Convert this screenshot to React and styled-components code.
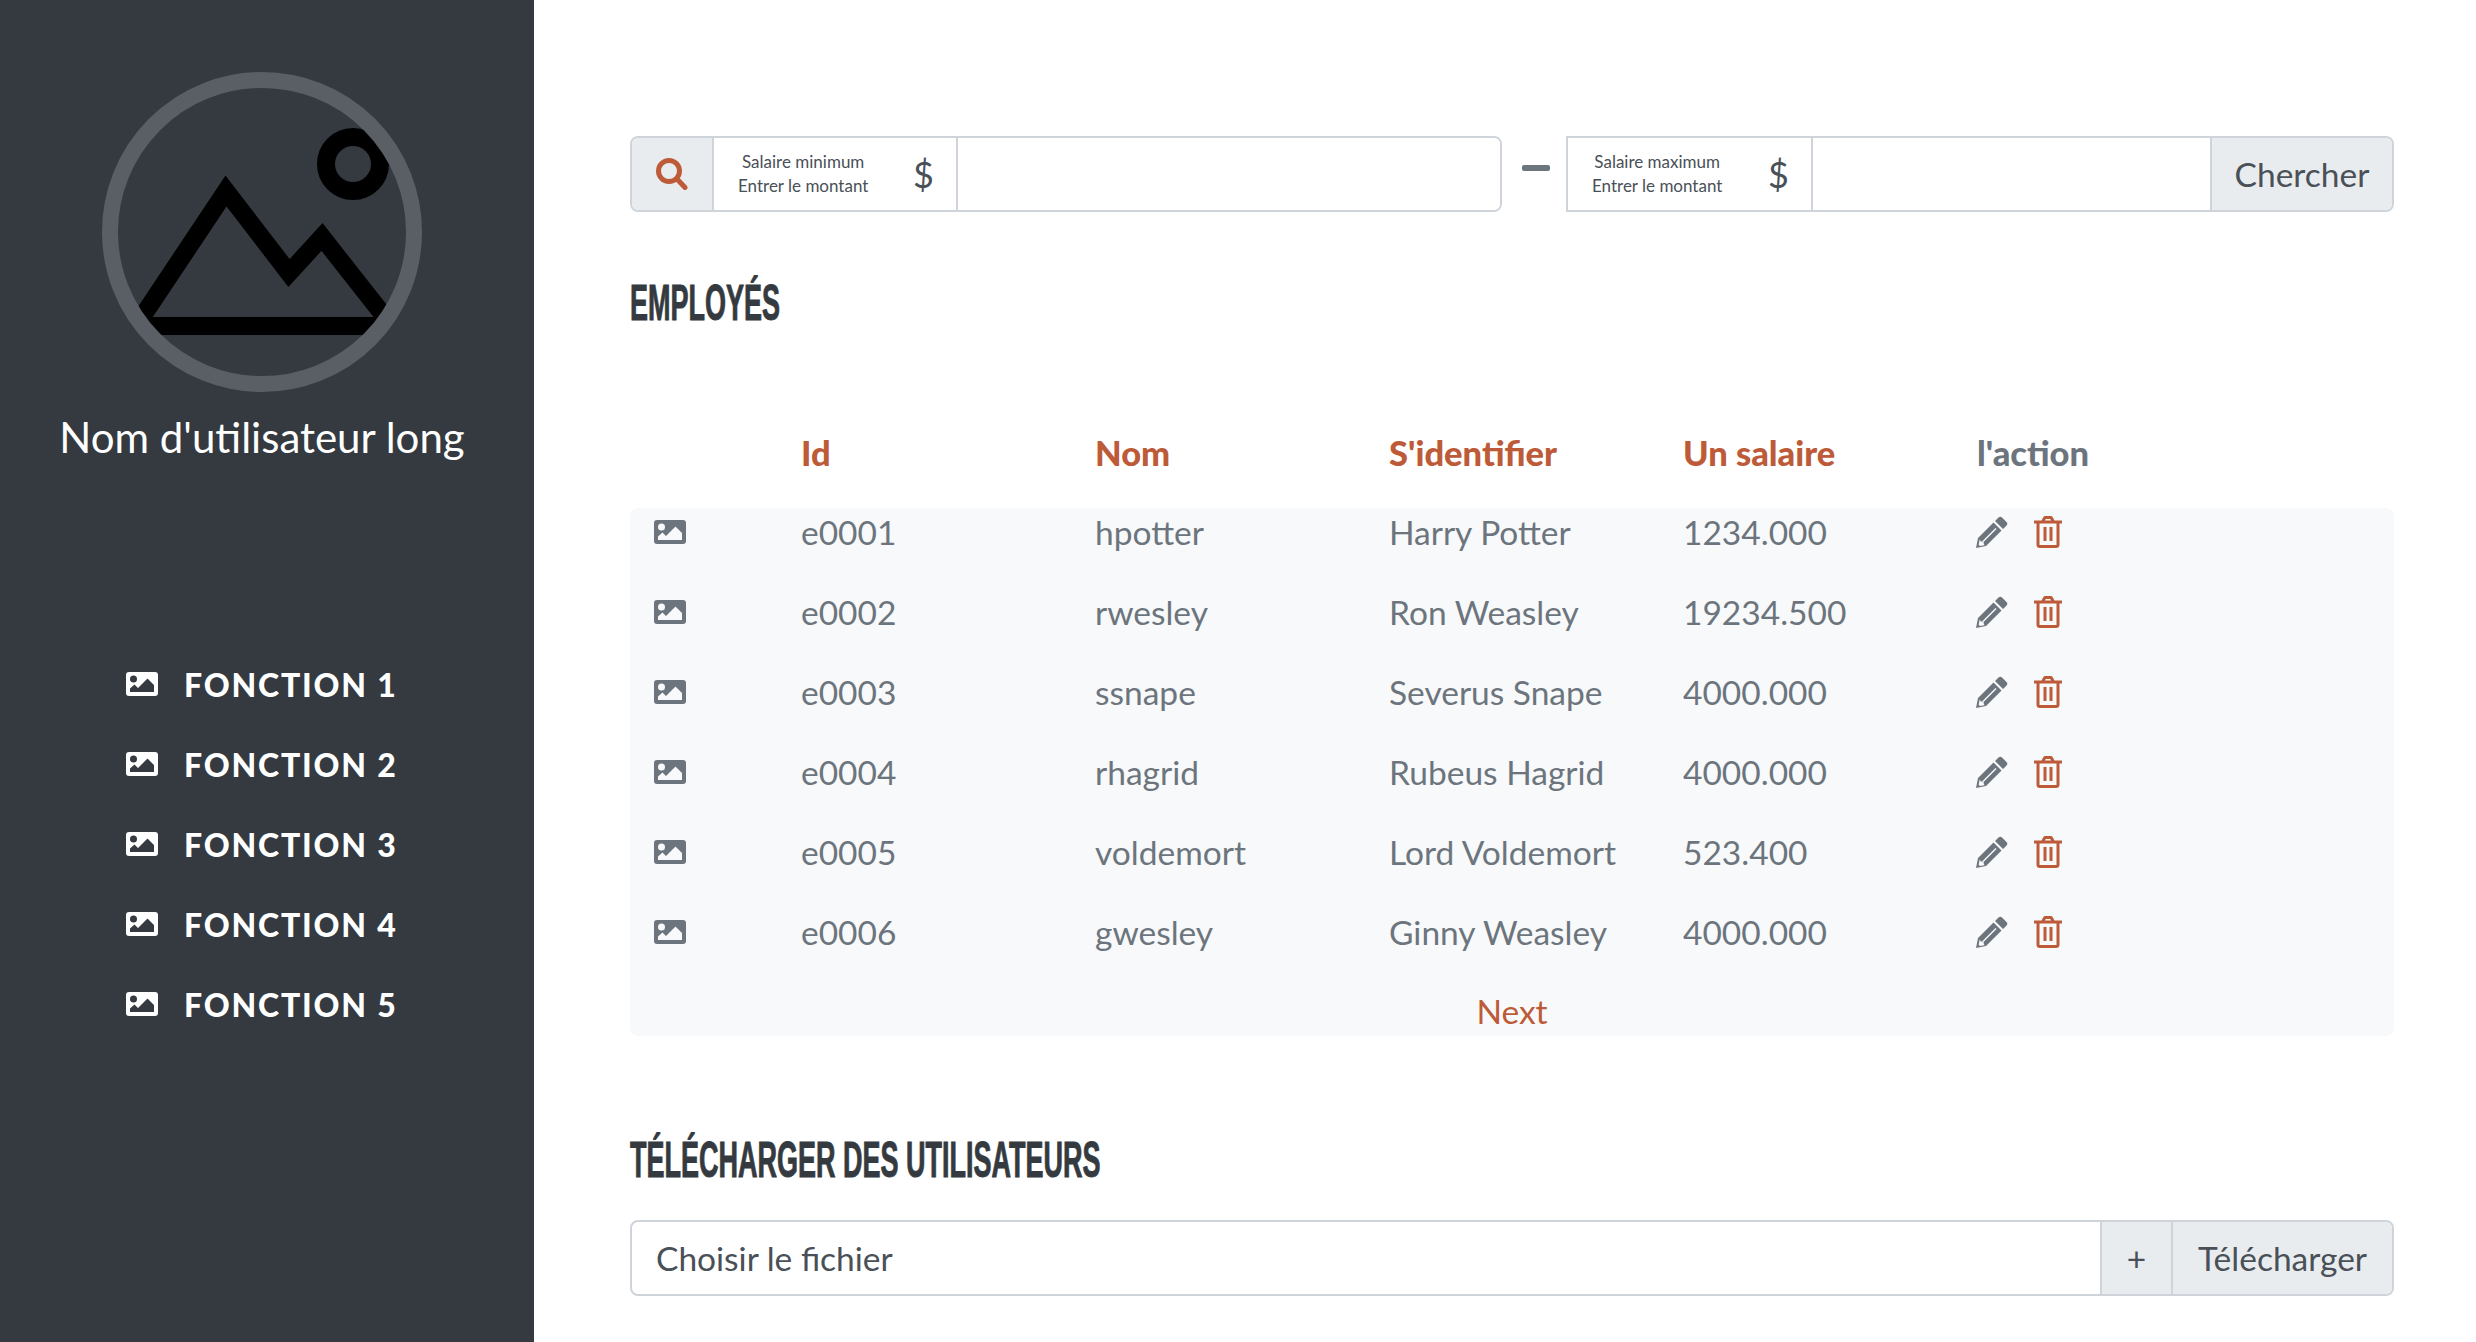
import React from "react";
import styled, { createGlobalStyle } from "styled-components";

const BODY = `"Lato", "Noto Sans", sans-serif`;
const ORANGE = "#bd5b38";

const Global = createGlobalStyle`
  html, body { margin: 0; padding: 0; background: #fff; }
  body { font-family: ${BODY}; }
  * { box-sizing: border-box; }
`;

const Page = styled.div`
  display: flex;
  height: 1342px;
  overflow: hidden;
`;
const Sidebar = styled.aside`
  width: 534px;
  flex: none;
  background: #343a40;
  display: flex;
  flex-direction: column;
  padding: 72px 10px 0 0;
  align-items: center;
`;
const Avatar = styled.svg`
  width: 320px;
  height: 320px;
  display: block;
`;
const UserName = styled.div`
  margin-top: 21px;
  color: #fff;
  font-size: 42px;
  line-height: 48px;
  white-space: nowrap;
`;
const Menu = styled.nav`
  margin-top: 183px;
  align-self: flex-start;
  padding-left: 126px;
  display: flex;
  flex-direction: column;
`;
const MenuItem = styled.a`
  height: 80px;
  display: flex;
  align-items: center;
  gap: 26px;
  color: #fff;
  font-size: 32px;
  font-weight: 900;
  letter-spacing: 1.8px;
  svg { width: 32px; height: 24px; flex: none; }
`;
const Main = styled.main`
  flex: 1;
  min-width: 0;
  padding: 136px 82px 0 96px;
`;
const SearchBar = styled.div`
  display: flex;
  align-items: center;
`;
const Group = styled.div`
  display: flex;
  height: 76px;
  flex: ${p => p.$flex || "none"};
  min-width: 0;
  border: 2px solid #ced4da;
  border-radius: ${p => p.$radius};
  overflow: hidden;
`;
const FileGroup = styled(Group)`
  margin-top: 32px;
`;
const SearchAddon = styled.div`
  width: 82px;
  flex: none;
  background: #e9ecef;
  border-right: 2px solid #ced4da;
  display: flex;
  align-items: center;
  justify-content: center;
  color: ${ORANGE};
  svg { width: 32px; height: 32px; }
`;
const Range = styled.div`
  width: ${p => p.$w}px;
  flex: none;
  border-right: 2px solid #ced4da;
  display: flex;
  align-items: center;
  justify-content: space-between;
  padding: 0 22px 0 24px;
`;
const RangeLabel = styled.div`
  font-size: 17px;
  line-height: 24px;
  color: #495057;
  text-align: center;
  white-space: nowrap;
`;
const Dollar = styled.span`
  font-size: 36px;
  color: #495057;
`;
const Filler = styled.div`
  flex: 1;
  background: #fff;
`;
const Dash = styled.div`
  width: 28px;
  height: 6px;
  border-radius: 2px;
  background: #6c757d;
  margin: 0 16px 0 20px;
  position: relative;
  top: -6px;
  flex: none;
`;
const Addon = styled.div`
  flex: none;
  width: ${p => p.$w}px;
  background: #e9ecef;
  border-left: 2px solid #ced4da;
  display: flex;
  align-items: center;
  justify-content: center;
  color: #495057;
  font-size: 33.5px;
  white-space: nowrap;
`;
const Heading = styled.h2`
  margin: ${p => p.$margin};
  height: 56px;
  display: flex;
  align-items: center;
  font-family: "Liberation Sans Narrow", "Liberation Sans", sans-serif;
  font-weight: 700;
  font-size: 50px;
  color: #343a40;
  text-transform: uppercase;
  white-space: nowrap;
  -webkit-text-stroke: 1px #343a40;
  transform: scaleX(0.54);
  transform-origin: left center;
`;
const TableHead = styled.div`
  margin: 91px 0 26px;
  display: grid;
  grid-template-columns: 171px repeat(4, 294px) 1fr;
  height: 60px;
  align-items: center;
  font-size: 34.5px;
  font-weight: 900;
`;
const HeadCell = styled.div`
  color: ${p => (p.$muted ? "#6c757d" : ORANGE)};
`;
const TableBody = styled.div`
  background: #f8f9fa;
  border-radius: 8px;
  height: 528px;
`;
const Row = styled.div`
  display: grid;
  grid-template-columns: 171px repeat(4, 294px) 1fr;
  height: 80px;
  align-items: center;
  font-size: 33.5px;
  color: #6c757d;
  &:first-child { height: 64px; padding-bottom: 16px; }
`;
const RowIcon = styled.div`
  padding-left: 24px;
  display: flex;
  svg { width: 32px; height: 24px; }
`;
const Actions = styled.div`
  display: flex;
  align-items: center;
  gap: 26px;
  margin-left: -1px;
`;
const Next = styled.div`
  color: ${ORANGE};
  font-size: 33.5px;
  text-align: center;
  height: 64px;
  padding-top: 17px;
  line-height: 44px;
`;
const FileName = styled.div`
  flex: 1;
  display: flex;
  align-items: center;
  padding-left: 24px;
  font-size: 33.5px;
  color: #495057;
`;

const ImageIcon = () => (
  <svg viewBox="0 0 32 24" fill="currentColor">
    <path fillRule="evenodd" d="M3 0h26a3 3 0 0 1 3 3v18a3 3 0 0 1-3 3H3a3 3 0 0 1-3-3V3a3 3 0 0 1 3-3Zm4.500 3.500a3.500 3.500 0 1 0 0 7 3.500 3.500 0 0 0 0-7ZM4 20h24v-7l-6.500-6.500L12 16l-3.500-3.500L4 16.500Z" />
  </svg>
);
const Pencil = () => (
  <svg viewBox="0 0 32 32" width="32" height="32" fill="#6c757d">
    <path fillRule="evenodd" d="M22.500 1.500a2.500 2.500 0 0 1 3.500 0l4.500 4.500a2.500 2.500 0 0 1 0 3.500l-3.500 3.500-8-8ZM17.500 6.500l8 8L10 30 0 32l2-10Zm2 5.500L6.500 25l1 1L20.500 13ZM3.700 23.200l-1 5.500 1.300 1.300 5.500-1-1.500-.2-.5-3-3-.5Z" />
  </svg>
);
const Trash = () => (
  <svg viewBox="0 0 28 32" width="28" height="32" fill="none" stroke={ORANGE} strokeWidth="3">
    <path d="M0 6h28M4 6v22.500a2 2 0 0 0 2 2h16a2 2 0 0 0 2-2V6M8.500 6l2-4a1.500 1.500 0 0 1 1-.500h5a1.500 1.500 0 0 1 1 .500l2 4" />
    <path d="M11 11v14M17 11v14" />
  </svg>
);
const Search = () => (
  <svg viewBox="0 0 32 32" fill="none" stroke="currentColor" strokeWidth="5" strokeLinecap="round">
    <circle cx="13" cy="13" r="10.500" />
    <path d="M21 21l8 8.500" />
  </svg>
);

const rows = [
  ["e0001", "hpotter", "Harry Potter", "1234.000"],
  ["e0002", "rwesley", "Ron Weasley", "19234.500"],
  ["e0003", "ssnape", "Severus Snape", "4000.000"],
  ["e0004", "rhagrid", "Rubeus Hagrid", "4000.000"],
  ["e0005", "voldemort", "Lord Voldemort", "523.400"],
  ["e0006", "gwesley", "Ginny Weasley", "4000.000"],
];

export default function App() {
  return (
    <Page>
      <Global />
      <Sidebar>
        <Avatar viewBox="1 1 320 320">
          <defs>
            <clipPath id="c"><circle cx="161" cy="161" r="150" /></clipPath>
          </defs>
          <g clipPath="url(#c)" fill="none" stroke="#000" strokeWidth="18" strokeMiterlimit="10">
            <path d="M35 255 125 120l63 82 33-36 70 89Z" />
            <circle cx="252" cy="93" r="27" />
          </g>
          <circle cx="161" cy="161" r="152" fill="none" stroke="#5a5f65" strokeWidth="16" />
        </Avatar>
        <UserName>Nom d'utilisateur long</UserName>
        <Menu>
          {[1, 2, 3, 4, 5].map(n => (
            <MenuItem key={n}><ImageIcon />FONCTION {n}</MenuItem>
          ))}
        </Menu>
      </Sidebar>
      <Main>
        <SearchBar>
          <Group $flex="0 0 872px" $radius="8px">
            <SearchAddon><Search /></SearchAddon>
            <Range $w={244}>
              <RangeLabel>Salaire minimum<br />Entrer le montant</RangeLabel>
              <Dollar>$</Dollar>
            </Range>
            <Filler />
          </Group>
          <Dash />
          <Group $flex="1" $radius="0 8px 8px 0">
            <Range $w={245}>
              <RangeLabel>Salaire maximum<br />Entrer le montant</RangeLabel>
              <Dollar>$</Dollar>
            </Range>
            <Filler />
            <Addon $w={182}>Chercher</Addon>
          </Group>
        </SearchBar>
        <Heading $margin="63px 0 0">Employés</Heading>
        <TableHead>
          <div />
          <HeadCell>Id</HeadCell>
          <HeadCell>Nom</HeadCell>
          <HeadCell>S'identifier</HeadCell>
          <HeadCell>Un salaire</HeadCell>
          <HeadCell $muted>l'action</HeadCell>
        </TableHead>
        <TableBody>
          {rows.map(r => (
            <Row key={r[0]}>
              <RowIcon><ImageIcon /></RowIcon>
              {r.map(c => <div key={c}>{c}</div>)}
              <Actions><Pencil /><Trash /></Actions>
            </Row>
          ))}
          <Next>Next</Next>
        </TableBody>
        <Heading $margin="96px 0 0">Télécharger des utilisateurs</Heading>
        <FileGroup $radius="8px">
          <FileName>Choisir le fichier</FileName>
          <Addon $w={71}>+</Addon>
          <Addon $w={221}>Télécharger</Addon>
        </FileGroup>
      </Main>
    </Page>
  );
}
